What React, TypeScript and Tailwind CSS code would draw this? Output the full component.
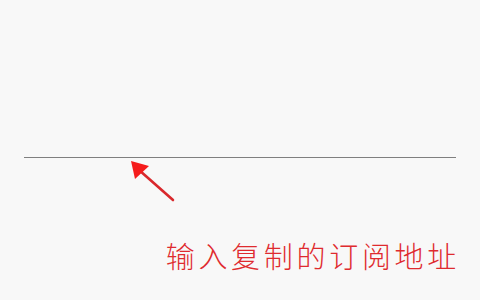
export default function App() {
  return (
    <div className="flex h-[300px] w-[480px] flex-col bg-[#f8f8f8] font-['Noto_Sans_CJK_SC','Noto_Sans',sans-serif]">
      {/* input underline */}
      <div className="mx-[24px] mt-[157px] h-px bg-[#7f7f7f]" />

      {/* arrow */}
      <svg
        className="ml-[126px] mt-[1px] block"
        width="52"
        height="46"
        viewBox="0 0 52 46"
      >
        <line
          x1="13"
          y1="11"
          x2="47"
          y2="41"
          stroke="#d9282c"
          strokeWidth="2.6"
          strokeLinecap="round"
        />
        <polygon points="5,2 23,7 9,20" fill="#f51c1c" />
      </svg>

      {/* hint */}
      <div className="mr-[20px] mt-[36px] flex justify-end">
        <span className="text-[29px] font-light leading-none tracking-[3.7px] text-[#df2b2f]">
          输入复制的订阅地址
        </span>
      </div>
    </div>
  );
}
